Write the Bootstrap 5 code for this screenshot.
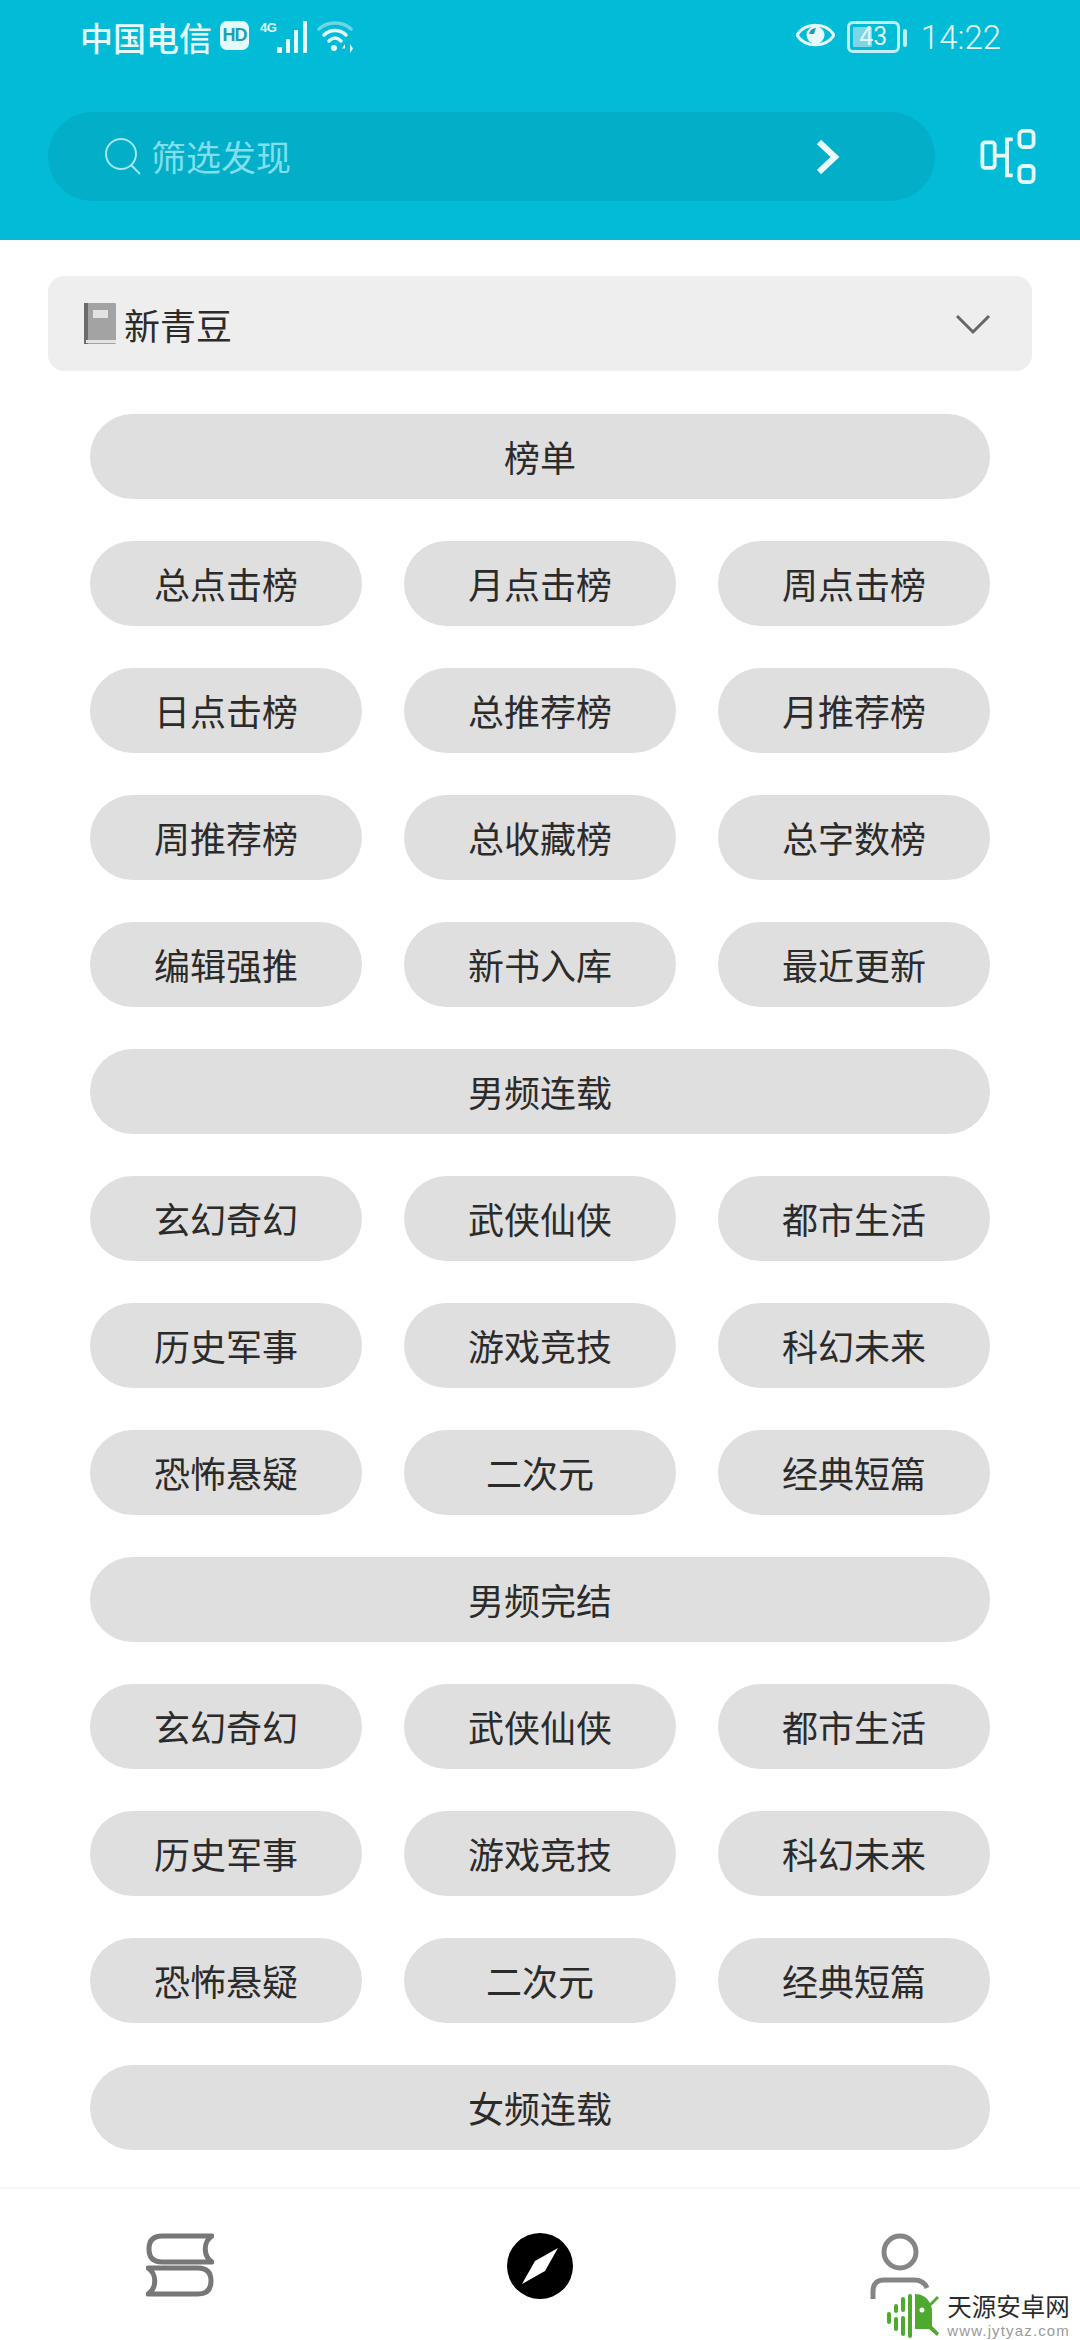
<!DOCTYPE html>
<html lang="zh">
<head>
    <meta charset="utf-8">
    <title>发现</title>
    <link href="https://cdn.jsdelivr.net/npm/bootstrap@5.3.0/dist/css/bootstrap.min.css" rel="stylesheet">
    <style>
        html, body { height: 100%; }
        body { font-family: "Noto Sans CJK SC", "Liberation Sans", sans-serif; background: #fff; color: #2b2b2b; }
        .screen { height: 2340px; overflow: hidden; position: relative; }
        .top-area { background: #02bbd7; height: 240px; padding: 0 43px 0 48px; }
        .status-row { height: 112px; padding: 21px 36px 0 32px; color: #e6fafc; font-size: 33px; line-height: 33px; }
        .status-row svg { display: block; flex: none; }
        .carrier-text { font-weight: 500; }
        .hd-tag { background: #e6fafc; color: #1c9fb5; font: 700 18px/29px "Liberation Sans", sans-serif; width: 29px; height: 29px; border-radius: 7px; text-align: center; margin-left: 8px; letter-spacing: -1px; }
        .net-tag { font: 700 13px/13px "Liberation Sans", sans-serif; width: 17px; margin-left: 11px; letter-spacing: -.5px; }
        .batt-box { width: 53px; height: 32px; border: 3px solid #bdeff5; border-radius: 6px; position: relative; color: #dff7fa; font: 400 25px/26px "Roboto", sans-serif; text-align: center; margin-left: 12px; }
        .batt-fill { position: absolute; left: 3px; top: 3px; bottom: 3px; width: 19px; background: #7fd5e3; border-radius: 1px; }
        .batt-num { position: relative; }
        .batt-tip { width: 4px; height: 18px; background: #bdeff5; border-radius: 2px; margin: 0 14px 0 3px; }
        .clock-text { font: 300 33px/33px "Roboto", sans-serif; }
        .filter-pill { background: #02aec8; height: 89px; width: 887px; padding: 0 95px 0 57px; color: #7fdfec; font-size: 35px; }
        .filter-pill span { margin-left: 10px; }
        .main-area { padding: 36px 48px 0; }
        .source-bar { background: #eeeeee; height: 95px; border-radius: 16px; padding: 0 41px 0 36px; font-size: 36px; color: #2b2b2b; }
        .source-bar span { margin-left: 8px; }
        .cat-grid { display: grid; grid-template-columns: repeat(3, 272px); gap: 42px; padding: 43px 0 0 42px; }
        .cat-btn { background: #dfdfdf; border: 0; height: 85px; padding: 0; font-size: 36px; line-height: 85px; color: #2b2b2b; }
        .cat-wide { grid-column: 1 / -1; }
        .tab-bar { position: absolute; left: 0; right: 0; top: 2187px; bottom: 0; border-top: 2px solid #f7f7f7; background: #fff; padding-top: 44px; }
        .tab-bar svg { display: block; margin: 0 auto; }
        .site-mark { position: absolute; right: 10px; bottom: 2px; }
        .site-name { color: #2b2b2b; font-size: 24.5px; line-height: 22px; }
        .site-url { color: #9a9a9a; font: 400 15px/15px "Liberation Sans", sans-serif; letter-spacing: 1.15px; margin-top: 6px; }
    </style>
</head>
<body>
<div class="screen d-flex flex-column">
    <!-- header with status bar and search -->
    <div class="top-area">
        <div class="status-row d-flex align-items-start">
            <span class="carrier-text">中国电信</span>
            <div class="hd-tag">HD</div>
            <div class="net-tag">4G</div>
            <svg width="32" height="32" viewBox="0 0 32 32" fill="#e6fafc"><rect x="0" y="26" width="5" height="6" rx="1"/><rect x="9" y="18" width="4" height="14" rx="1"/><rect x="17" y="9" width="4" height="23" rx="1"/><rect x="26" y="0" width="4" height="32" rx="1"/></svg>
            <svg class="ms-2" width="38" height="32" viewBox="0 0 38 32" fill="none" stroke="#e6fafc" stroke-width="3.5" stroke-linecap="round"><path d="M2 8C11 0 25 0 34 8" stroke="#6fd6e6"/><path d="M7 14C13 8 23 8 29 14"/><path d="M12 20C16 16 20 16 24 20"/><circle cx="17" cy="27" r="3" fill="#e6fafc" stroke="none"/><path d="M28 23l-3 4.500h3zM33 23l3 4.500-3 4.500z" fill="#e6fafc" stroke="none"/></svg>
            <div class="flex-grow-1"></div>
            <svg width="39" height="28" viewBox="0 0 39 28"><path d="M1 14C9 1 30 1 38 14C30 27 9 27 1 14Z" fill="none" stroke="#e6fafc" stroke-width="3"/><circle cx="19.500" cy="14" r="9" fill="#e6fafc"/><path d="M13 13a7 7 0 0 1 7-6l-2 6z" fill="#1c9fb5"/></svg>
            <div class="batt-box"><div class="batt-fill"></div><span class="batt-num">43</span></div>
            <div class="batt-tip mt-2"></div>
            <span class="clock-text">14:22</span>
        </div>
        <div class="d-flex align-items-center">
            <div class="filter-pill rounded-pill d-flex align-items-center">
                <svg width="36" height="37" viewBox="0 0 36 37" fill="none" stroke="#a5e7f0" stroke-width="2"><circle cx="16" cy="16" r="15"/><path d="M26 27l9 9"/></svg>
                <span>筛选发现</span>
                <div class="flex-grow-1"></div>
                <svg width="24" height="36" viewBox="0 0 24 36" fill="none" stroke="#eafcfe" stroke-width="6"><path d="M3 3l16 15L3 33"/></svg>
            </div>
            <svg class="ms-auto" width="58" height="55" viewBox="0 0 58 58" fill="none" stroke="#e6fafc" stroke-width="4"><rect x="2" y="14" width="13" height="27" rx="3"/><path d="M15 28h11M34 11h-6v38h6"/><rect x="41" y="2" width="15" height="17" rx="4"/><rect x="41" y="39" width="15" height="17" rx="4"/></svg>
        </div>
    </div>

    <div class="main-area">
        <!-- book source selector -->
        <div class="source-bar d-flex align-items-center">
            <svg width="32" height="42" viewBox="0 0 32 42"><rect x="0" y="0" width="32" height="41" rx="1" fill="#a3a3a3"/><rect x="0" y="0" width="4" height="41" fill="#6c6c6c"/><rect x="9" y="7" width="15" height="8" fill="#e2e2e2"/><rect x="2" y="37" width="30" height="3" fill="#e4e4e4"/></svg>
            <span>新青豆</span>
            <svg class="ms-auto" width="36" height="22" viewBox="0 0 36 22" fill="none" stroke="#666" stroke-width="3"><path d="M2 3l16 16L34 3"/></svg>
        </div>

        <div class="cat-grid">
            <button class="btn cat-btn cat-wide rounded-pill">榜单</button>
            <button class="btn cat-btn rounded-pill">总点击榜</button>
            <button class="btn cat-btn rounded-pill">月点击榜</button>
            <button class="btn cat-btn rounded-pill">周点击榜</button>
            <button class="btn cat-btn rounded-pill">日点击榜</button>
            <button class="btn cat-btn rounded-pill">总推荐榜</button>
            <button class="btn cat-btn rounded-pill">月推荐榜</button>
            <button class="btn cat-btn rounded-pill">周推荐榜</button>
            <button class="btn cat-btn rounded-pill">总收藏榜</button>
            <button class="btn cat-btn rounded-pill">总字数榜</button>
            <button class="btn cat-btn rounded-pill">编辑强推</button>
            <button class="btn cat-btn rounded-pill">新书入库</button>
            <button class="btn cat-btn rounded-pill">最近更新</button>
            <button class="btn cat-btn cat-wide rounded-pill">男频连载</button>
            <button class="btn cat-btn rounded-pill">玄幻奇幻</button>
            <button class="btn cat-btn rounded-pill">武侠仙侠</button>
            <button class="btn cat-btn rounded-pill">都市生活</button>
            <button class="btn cat-btn rounded-pill">历史军事</button>
            <button class="btn cat-btn rounded-pill">游戏竞技</button>
            <button class="btn cat-btn rounded-pill">科幻未来</button>
            <button class="btn cat-btn rounded-pill">恐怖悬疑</button>
            <button class="btn cat-btn rounded-pill">二次元</button>
            <button class="btn cat-btn rounded-pill">经典短篇</button>
            <button class="btn cat-btn cat-wide rounded-pill">男频完结</button>
            <button class="btn cat-btn rounded-pill">玄幻奇幻</button>
            <button class="btn cat-btn rounded-pill">武侠仙侠</button>
            <button class="btn cat-btn rounded-pill">都市生活</button>
            <button class="btn cat-btn rounded-pill">历史军事</button>
            <button class="btn cat-btn rounded-pill">游戏竞技</button>
            <button class="btn cat-btn rounded-pill">科幻未来</button>
            <button class="btn cat-btn rounded-pill">恐怖悬疑</button>
            <button class="btn cat-btn rounded-pill">二次元</button>
            <button class="btn cat-btn rounded-pill">经典短篇</button>
            <button class="btn cat-btn cat-wide rounded-pill">女频连载</button>
        </div>
    </div>

    <!-- bottom tabs -->
    <div class="tab-bar">
        <div class="row g-0">
            <div class="col-4">
                <svg width="68" height="64" viewBox="0 0 68 64" fill="none" stroke="#777" stroke-width="5"><path d="M66 3H16C7 3 3 8 3 16s4 13 13 13h50C57 23 57 9 66 3Z" stroke-linejoin="round"/><path d="M2 35h50c9 0 13 5 13 13s-4 13-13 13H2C11 55 11 41 2 35Z" stroke-linejoin="round"/></svg>
            </div>
            <div class="col-4">
                <svg width="66" height="66" viewBox="0 0 66 66"><circle cx="33" cy="33" r="33" fill="#000"/><path d="M51 15L38 38 15 51 28 28Z" fill="#fff"/></svg>
            </div>
            <div class="col-4">
                <svg width="60" height="66" viewBox="0 0 60 66" fill="none" stroke="#858585" stroke-width="5"><circle cx="30" cy="19" r="16"/><path d="M3 66V58C3 50 8 47 14 47H44C50 47 55 50 57 55"/></svg>
            </div>
        </div>
    </div>

    <!-- watermark in the corner of the picture -->
    <div class="site-mark d-flex align-items-center gap-2">
        <svg width="52" height="44" viewBox="0 0 52 44" fill="#4eaa2f"><rect x="0" y="18" width="4" height="12" rx="2"/><rect x="7" y="10" width="4" height="9" rx="2"/><rect x="7" y="23" width="4" height="14" rx="2"/><rect x="14" y="3" width="4" height="15" rx="2"/><rect x="14" y="22" width="4" height="20" rx="2"/><rect x="21" y="0" width="4" height="44" rx="2"/><path d="M28 0c6 0 12 3 15 9l7-7 2 2-8 8c1 2 1 4 1 6v14l7 7-2 3-8-7H28Z"/><circle cx="35" cy="16" r="2.500" fill="#fff"/></svg>
        <div>
            <div class="site-name">天源安卓网</div>
            <div class="site-url">www.jytyaz.com</div>
        </div>
    </div>
</div>
<script src="https://cdn.jsdelivr.net/npm/bootstrap@5.3.0/dist/js/bootstrap.bundle.min.js"></script>
</body>
</html>
